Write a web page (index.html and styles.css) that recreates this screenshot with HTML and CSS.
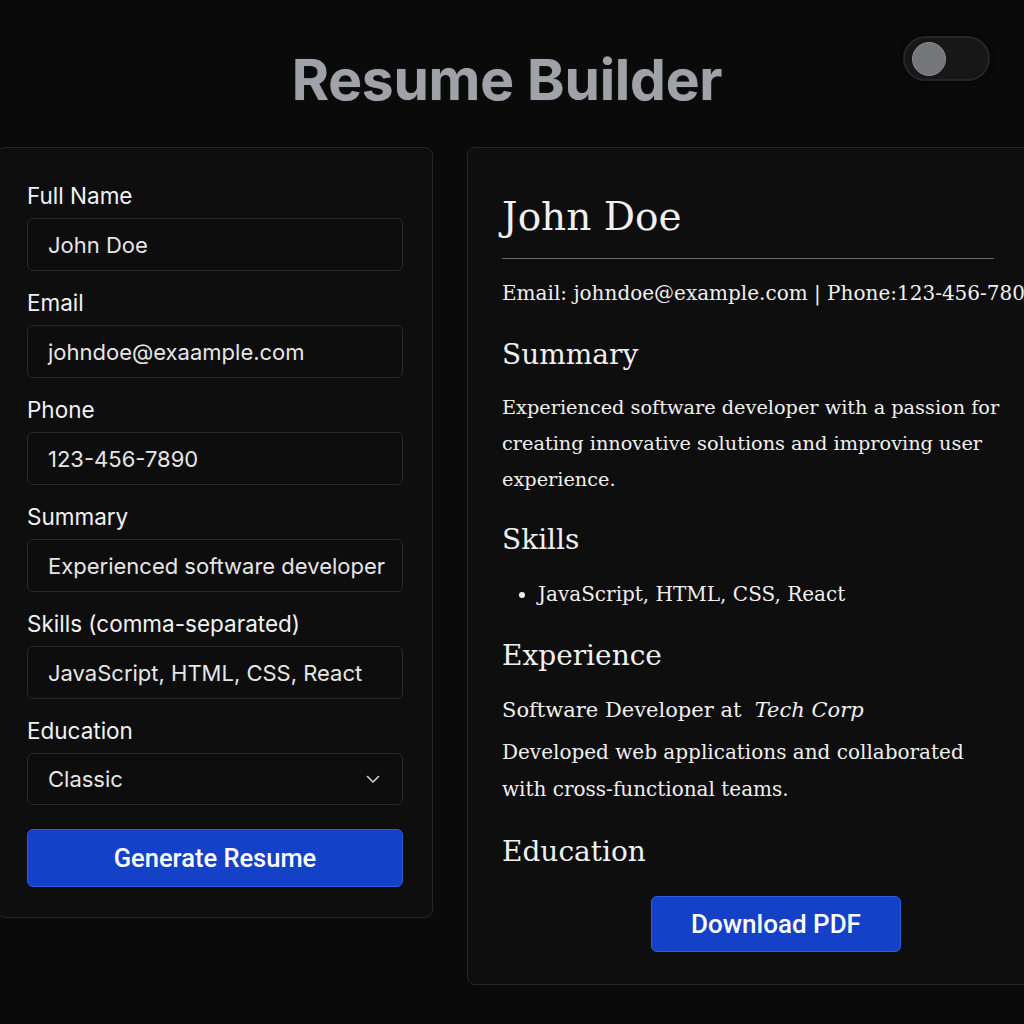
FILE: index.html
```html
<!DOCTYPE html>
<html lang="en">
<head>
<meta charset="utf-8">
<title>Resume Builder</title>
<link rel="stylesheet" href="styles.css">
</head>
<body>
<header class="top">
  <h1 class="title">Resume Builder</h1>
  <div class="toggle"><span class="knob"></span></div>
</header>
<main class="layout">
  <form class="card form-card">
    <div class="field">
      <label class="label">Full Name</label>
      <div class="input">John Doe</div>
    </div>
    <div class="field">
      <label class="label">Email</label>
      <div class="input">johndoe@exaample.com</div>
    </div>
    <div class="field">
      <label class="label">Phone</label>
      <div class="input">123-456-7890</div>
    </div>
    <div class="field">
      <label class="label">Summary</label>
      <div class="input">Experienced software developer</div>
    </div>
    <div class="field">
      <label class="label">Skills (comma-separated)</label>
      <div class="input">JavaScript, HTML, CSS, React</div>
    </div>
    <div class="field">
      <label class="label">Education</label>
      <div class="input select">Classic
        <svg class="chev" width="14" height="9" viewBox="0 0 14 9"><path d="M1.5 1.5 L7 7 L12.5 1.5" fill="none" stroke="#d0d0d0" stroke-width="1.6" stroke-linecap="round" stroke-linejoin="round"/></svg>
      </div>
    </div>
    <button type="button" class="btn btn-generate">Generate Resume</button>
  </form>
  <section class="card preview">
    <h2 class="name">John Doe</h2>
    <p class="contact">Email: johndoe@example.com | Phone:123-456-7800</p>
    <h3 class="sec sec-summary">Summary</h3>
    <p class="body summary">Experienced software developer with a passion for creating innovative solutions and improving user experience.</p>
    <h3 class="sec">Skills</h3>
    <ul class="skills"><li>JavaScript, HTML, CSS, React</li></ul>
    <h3 class="sec">Experience</h3>
    <p class="job">Software Developer at&nbsp; <em>Tech Corp</em></p>
    <p class="body desc">Developed web applications and collaborated with cross-functional teams.</p>
    <h3 class="sec">Education</h3>
    <div class="dl-row"><button type="button" class="btn btn-dl">Download PDF</button></div>
  </section>
</main>
</body>
</html>
```

FILE: styles.css
```css
* { box-sizing: border-box; }
html, body { margin: 0; padding: 0; }
body {
  background: #0a0a0a;
  color: #ececec;
  font-family: Inter, "Noto Sans", sans-serif;
  width: 1024px;
  height: 1024px;
  overflow: hidden;
}
.top {
  position: relative;
  height: 147px;
  display: flex;
  justify-content: center;
  padding-right: 10px;
}
.title {
  margin: 0;
  padding-top: 46px;
  font-size: 56.8px;
  font-weight: 700;
  line-height: 68px;
  color: #a0a2a9;
  letter-spacing: -0.2px;
  text-shadow: 0 0 1px rgba(255,255,255,0.35);
}
.toggle {
  position: absolute;
  left: 903px;
  top: 36px;
  width: 87px;
  height: 45px;
  border-radius: 23px;
  background: #171717;
  border: 2px solid #262626;
  box-shadow: 0 0 4px rgba(0,0,0,0.8);
}
.knob {
  position: absolute;
  left: 7px;
  top: 4px;
  width: 34px;
  height: 34px;
  border-radius: 50%;
  background: #75767a;
  border: 1px solid #8a8b8f;
}
.layout {
  display: flex;
  align-items: flex-start;
  gap: 34px;
  margin-left: -3px;
}
.card {
  background: #0e0e0e;
  border: 1px solid #262626;
  border-radius: 8px;
}
.form-card {
  width: 436px;
  flex: none;
  padding: 35px 29px 30px 29px;
  display: flex;
  flex-direction: column;
  margin: 0;
}
.field { display: flex; flex-direction: column; margin-bottom: 19px; }
.label {
  font-size: 22.5px;
  line-height: 25px;
  color: #f2f2f2;
  margin-bottom: 10px;
}
.input {
  height: 53px;
  border: 1px solid #2a2a2a;
  border-radius: 6px;
  background: #0d0d0d;
  padding: 0 20px;
  display: flex;
  align-items: center;
  font-size: 22px;
  color: #e6e6e6;
  white-space: nowrap;
  overflow: hidden;
}
.select { justify-content: space-between; height: 52px; }
.chev { margin-right: 2px; }
.btn {
  border: 1px solid #2f5be0;
  background: #1541c9;
  color: #ffffff;
  font-family: Roboto, "Noto Sans", sans-serif;
  font-weight: 500;
  border-radius: 6px;
  cursor: pointer;
}
.btn-generate {
  height: 58px;
  font-size: 25.5px;
  margin-top: 5px;
}
.preview {
  width: 600px;
  flex: none;
  padding: 40px 34px 32px 34px;
  height: 838px;
  font-family: "DejaVu Serif", "Liberation Serif", serif;
  color: #f0f0f0;
}
.name {
  margin: 0;
  width: 492px;
  font-size: 39px;
  font-weight: 400;
  line-height: 58px;
  padding-bottom: 12px;
  border-bottom: 1px solid #6a6a6a;
}
.contact {
  margin: 17px 0 0 0;
  font-size: 20px;
  line-height: 34px;
  white-space: nowrap;
}
.sec {
  margin: 22px 0 0 0;
  font-size: 28px;
  font-weight: 400;
  line-height: 40px;
}
.sec-summary { margin-top: 25px; }
.body {
  margin: 0;
  font-size: 19.3px;
  line-height: 36px;
}
.summary { width: 505px; margin-top: 15px; }
.skills {
  margin: 16px 0 0 0;
  padding-left: 36px;
  font-size: 20px;
  line-height: 36px;
}
.skills + .sec { margin-top: 24px; }
.job {
  margin: 16px 0 0 0;
  font-size: 21px;
  line-height: 36px;
}
.job em { font-style: italic; }
.desc { margin-top: 6px; width: 500px; font-size: 20px; line-height: 37px; }
.desc + .sec { margin-top: 24px; }
.dl-row { margin-top: 24px; padding-left: 149px; }
.btn-dl {
  width: 250px;
  height: 56px;
  font-size: 26px;
}
```
